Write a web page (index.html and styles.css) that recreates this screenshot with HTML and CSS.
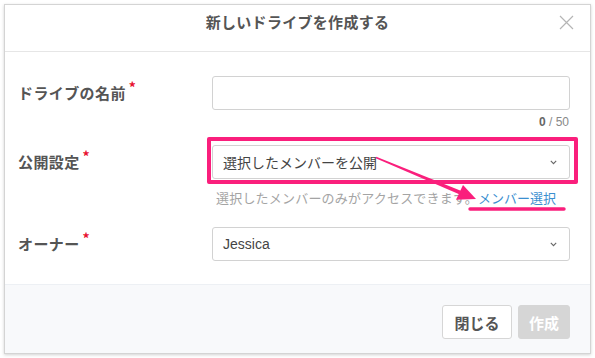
FILE: index.html
```html
<!DOCTYPE html>
<html lang="ja">
<head>
<meta charset="utf-8">
<link rel="stylesheet" href="styles.css">
</head>
<body>
<div class="modal">
  <div class="header">
    <div class="title">新しいドライブを作成する</div>
    <svg class="close" width="15" height="15" viewBox="0 0 15 15"><path d="M1 1L14 14M14 1L1 14" stroke="#b5b5b5" stroke-width="1.2" fill="none"/></svg>
  </div>
  <div class="body">
    <div class="row">
      <div class="label">ドライブの名前<span class="req">*</span></div>
      <div class="field">
        <div class="input"></div>
      </div>
    </div>
    <div class="counter"><b>0</b> / 50</div>
    <div class="row row2">
      <div class="label">公開設定<span class="req">*</span></div>
      <div class="field">
        <div class="select">
          <span class="val jp">選択したメンバーを公開</span>
          <svg class="chev" width="7" height="5" viewBox="0 0 7 5"><path d="M0.8 0.8L3.5 3.6L6.2 0.8" stroke="#666" stroke-width="1.1" fill="none"/></svg>
        </div>
        <div class="hilite"></div>
      </div>
    </div>
    <div class="helper">選択したメンバーのみがアクセスできます。<span class="link">メンバー選択</span></div>
    <div class="row row3">
      <div class="label">オーナー<span class="req">*</span></div>
      <div class="field">
        <div class="select">
          <span class="val">Jessica</span>
          <svg class="chev" width="7" height="5" viewBox="0 0 7 5"><path d="M0.8 0.8L3.5 3.6L6.2 0.8" stroke="#666" stroke-width="1.1" fill="none"/></svg>
        </div>
      </div>
    </div>
  </div>
  <div class="footer">
    <button class="btn close-btn">閉じる</button>
    <button class="btn create-btn">作成</button>
  </div>
</div>
<svg class="annot" width="595" height="358" viewBox="0 0 595 358">
  <polygon points="375.7,158.2 376.3,156.8 460.8,190.7 459.2,194.3" fill="#fa1f7c"/>
  <polygon points="476,199 463,185 456,199.8" fill="#fa1f7c"/>
  <line x1="470" y1="209" x2="564" y2="209" stroke="#fa1f7c" stroke-width="3.4" stroke-linecap="round"/>
</svg>
</body>
</html>
```
FILE: styles.css
```css
* { box-sizing: border-box; }
html, body { margin: 0; padding: 0; background: #fff; }
body {
  width: 595px; height: 358px; overflow: hidden; position: relative;
  font-family: "Liberation Sans", "Noto Sans CJK JP", sans-serif;
  color: #555;
}
.jp, .title, .label, .helper, .btn { font-family: "Noto Sans CJK JP", "Liberation Sans", sans-serif; }
.modal {
  margin: 4px 0 0 4px;
  width: 587px; height: 350px;
  border: 1px solid #d4d4d4;
  box-shadow: 0 1px 3px rgba(0,0,0,0.18);
  background: #fff;
  display: flex; flex-direction: column;
}
.header {
  height: 47px;
  border-bottom: 1px solid #e6e6e6;
  display: flex; align-items: flex-start; justify-content: center;
  padding-top: 6px;
  position: relative;
}
.title { font-size: 15px; line-height: 22px; font-weight: bold; color: #555; letter-spacing: 0.3px; }
.close { position: absolute; right: 16px; top: 10px; }
.body { padding: 24px 20px 0 13px; flex: 1; }
.row { display: grid; grid-template-columns: 194px 1fr; align-items: center; }
.label { font-size: 15px; font-weight: bold; color: #555; padding-bottom: 2px; letter-spacing: 0.4px; }
.req { color: #e8102f; font-size: 14px; position: relative; top: -6px; margin-left: 3px; }
.field { position: relative; }
.input { height: 34px; border: 1px solid #d2d2d2; border-radius: 3px; background: #fff; }
.counter { text-align: right; font-size: 12px; color: #888; line-height: 14px; margin-top: 5px; padding-right: 1px; }
.counter b { color: #666; }
.row2 { margin-top: 16px; }
.select {
  height: 34px; border: 1px solid #d2d2d2; border-radius: 3px; background: #fff;
  display: flex; align-items: center; justify-content: space-between;
  padding: 0 12px 0 10px;
}
.val { font-size: 14px; color: #444; }
.chev { margin-top: 1px; }
.hilite {
  position: absolute; left: -5px; right: -8px; top: -8px; bottom: -5px;
  border: 4px solid #fa1f7c; border-radius: 2px;
}
.helper { margin-left: 198px; margin-top: 11px; font-size: 13px; color: #a4a4a4; line-height: 16px; white-space: nowrap; letter-spacing: 0.2px; }
.link { color: #3b8fd0; letter-spacing: 0; }
.row3 { margin-top: 21px; }
.footer {
  height: 69px;
  background: #f8f9fb;
  border-top: 1px solid #edf0f4;
  display: flex; justify-content: flex-end; align-items: flex-start;
  padding: 20px 20px 0 0; gap: 6px;
}
.btn {
  height: 34px; border-radius: 3px; font-size: 15px; font-weight: bold; padding: 0;
}
.close-btn { width: 70px; background: #fff; border: 1px solid #d6d6d6; color: #555; }
.create-btn { width: 52px; background: #d6d6d6; border: 1px solid #d6d6d6; color: #fff; }
.annot { position: absolute; left: 0; top: 0; pointer-events: none; }
```
